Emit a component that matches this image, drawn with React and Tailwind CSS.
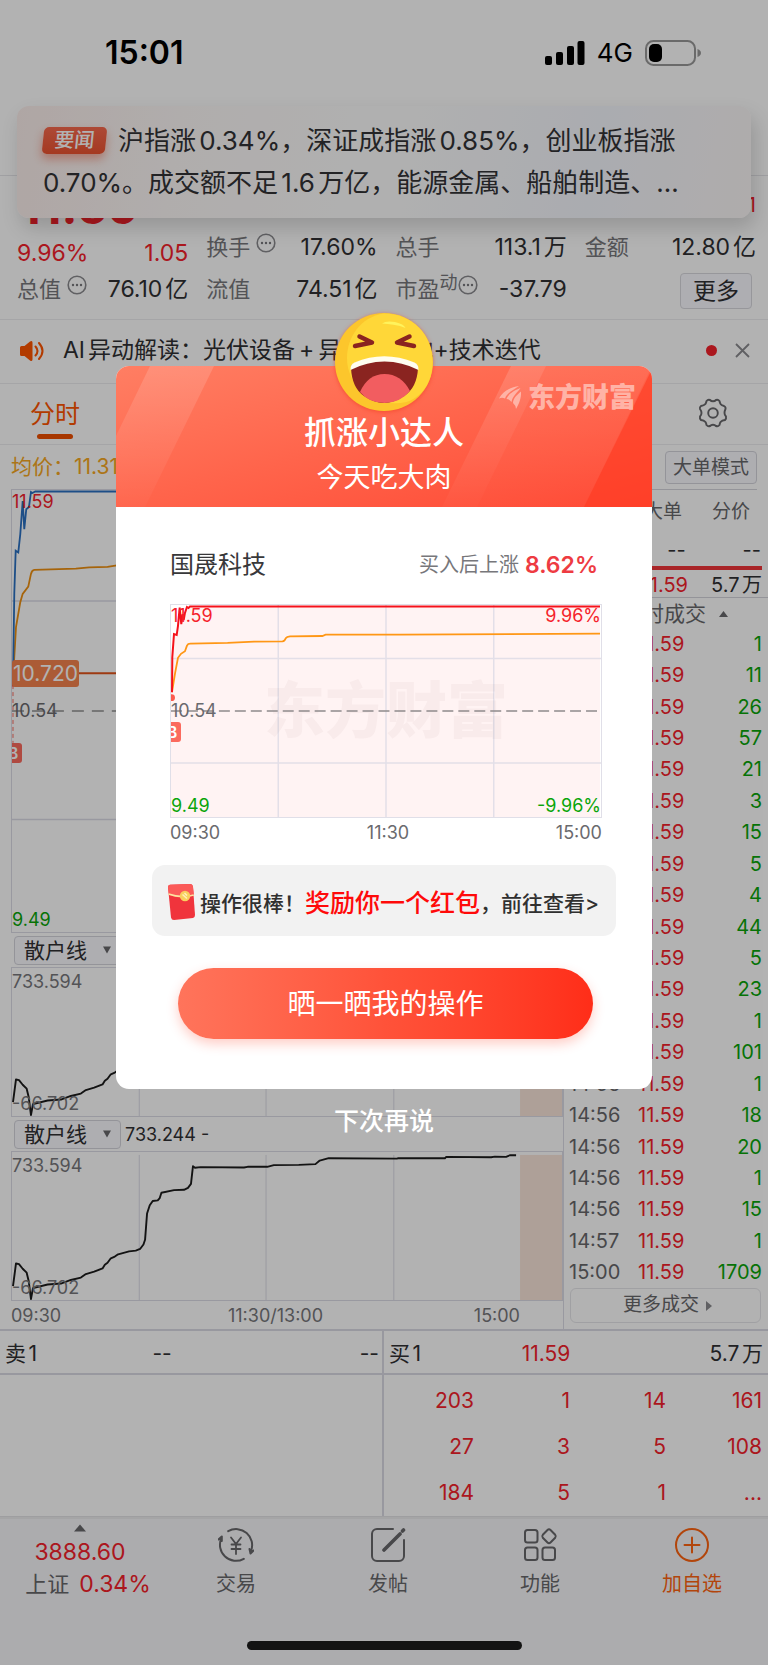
import React from "react";

const FLOW_LINE =
  "M1 136L4 113L7 113.7L10.7 118.3L14.7 122.3L16.7 130.7L19 149L21 138L35.7 134.3L49 133.3L59 129.7L69 127.3L74 123.7L82.3 121.3L90.7 118L93 114.3L95.7 112.3L99 107.7L103 106L106.3 103.7L117.3 100.7L124 100L128.3 98.3L131.7 93.7L133.3 89L135.3 62.3L138 54L141 49.7L146 49L148 46.7L149.7 41.3L162.3 38.7L172.3 38.3L176.3 36.3L179.3 32.3L181.3 14.3L183.3 16L189 15.3L232.3 15.7L236 15L255.7 15L262.3 13.3L287.3 13L304 12.3L308.3 8.7L317.3 6.3L385.7 6.7L387 6.3L433.7 6.3L435 5L480 5.3L483.7 4.7L495 5L498.7 3.3L505 3.3";

const MODAL_PRICE =
  "M1 88L1.3 52.7L3 29.3L5.7 30.3L7 21L8.7 2.7L10.3 19.3L11.7 9.3L12.7 15.3L14 8L16 2L17.5 3L19 1.5L430 1.5";

const MODAL_AVG =
  "M1 88L4 69.3L7 53.3L10 49.3L14 46.7L16 41Q17 39 19.3 39L56.7 38.3L83.3 37L111.7 36.7Q114 36.500 115 33.500Q116 32 119.3 31.7L151.7 31.3L155 30L230 30L430 29";

const TICKS = [
  ["14:54", "1"],
  ["14:54", "11"],
  ["14:54", "26"],
  ["14:55", "57"],
  ["14:55", "21"],
  ["14:55", "3"],
  ["14:55", "15"],
  ["14:55", "5"],
  ["14:55", "4"],
  ["14:55", "44"],
  ["14:55", "5"],
  ["14:56", "23"],
  ["14:56", "1"],
  ["14:56", "101"],
  ["14:56", "1"],
  ["14:56", "18"],
  ["14:56", "20"],
  ["14:56", "1"],
  ["14:56", "15"],
  ["14:57", "1"],
  ["15:00", "1709"],
];

const QUEUE = [
  ["203", "1", "14", "161"],
  ["27", "3", "5", "108"],
  ["184", "5", "1", "..."],
];

function InfoDots() {
  return (
    <svg className="size-5 shrink-0" viewBox="0 0 20 20" fill="none" stroke="#8a8a8e" strokeWidth="1.6">
      <circle cx="10" cy="10" r="8.800" />
      <g fill="#77777b" stroke="none">
        <circle cx="6" cy="10" r="1.200" />
        <circle cx="10" cy="10" r="1.200" />
        <circle cx="14" cy="10" r="1.200" />
      </g>
    </svg>
  );
}

function Stat({ label, value, info, sup }) {
  return (
    <div className="flex items-center justify-between self-start leading-8">
      <span className="flex items-center text-[22px] text-[#77777b]">
        {label}
        {sup && <sup className="top-0 mb-3 text-lg leading-5">{sup}</sup>}
        {info && (
          <span className={sup ? "mb-2" : "mb-2 ml-1.5"}>
            <InfoDots />
          </span>
        )}
      </span>
      <span className="text-[#303033]">{value}</span>
    </div>
  );
}

function StatusBar() {
  return (
    <div className="flex h-[105px] items-center justify-between pl-[105px] pr-[67px] text-black">
      <span className="text-[32px] font-semibold">15:01</span>
      <div className="flex items-center">
        <svg className="h-6 w-10" viewBox="0 0 40 24">
          <rect x="0" y="15" width="7" height="9" rx="2" />
          <rect x="11" y="11" width="7" height="13" rx="2" />
          <rect x="22" y="5" width="7" height="19" rx="2" />
          <rect x="32.500" y="0" width="7" height="24" rx="2" />
        </svg>
        <span className="ml-3 text-[26px]">4G</span>
        <svg className="ml-3 h-[26px] w-14" viewBox="0 0 56 26">
          <rect x="1" y="1" width="49" height="24" rx="7.500" fill="none" stroke="#999" strokeWidth="2" />
          <rect x="4" y="4" width="13" height="18" rx="5" />
          <path d="M52.500 9q3.500 1.500 3.500 4t-3.500 4z" fill="#999" />
        </svg>
      </div>
    </div>
  );
}

function NewsToast() {
  return (
    <div className="absolute inset-x-[17px] top-[106px] rounded-xl bg-[linear-gradient(100deg,#fbeeeb_0%,#fcf8f7_22%,#fdfdfd_50%,#f4f6fd_78%,#fbf6f6_100%)] pb-[14px] pl-[26px] pr-4 pt-[14px] text-[26px] leading-[42px] text-[#333336] shadow-[4px_10px_20px_rgba(0,0,0,0.16)]">
      <p className="[text-autospace:normal]">
        <span className="relative -top-0.5 mr-3 inline-block w-[63px] -skew-x-6 rounded-[5px] bg-gradient-to-b from-[#f8694d] to-[#ec5330] text-center align-middle text-[20px] font-medium leading-[27px] text-white shadow-[0_5px_10px_rgba(236,83,48,0.45)]">
          要闻
        </span>
        沪指涨0.34%，深证成指涨0.85%，创业板指涨
        <br />
        0.70%。成交额不足1.6万亿，能源金属、船舶制造、…
      </p>
    </div>
  );
}

function Quote() {
  return (
    <section className="border-b border-[#ececef] pb-[10px] pl-[17px] pr-3 text-[23px] [text-autospace:normal]">
      <div className="flex h-[55px] items-start justify-between text-[#f5222b]">
        <strong className="pl-[3px] text-[48px] font-bold leading-[62px]">11.59</strong>
        <span className="text-xl leading-[58px]">11</span>
      </div>
      <div className="grid h-[38px] grid-cols-4 gap-x-[18px]">
        <div className="flex justify-between self-end leading-8 text-[#f5222b]">
          <span>9.96%</span>
          <span>1.05</span>
        </div>
        <Stat label="换手" value="17.60%" info />
        <Stat label="总手" value="113.1万" />
        <Stat label="金额" value="12.80亿" />
      </div>
      <div className="grid h-10 grid-cols-4 items-center gap-x-[18px] pt-1">
        <Stat label="总值" value="76.10亿" info />
        <Stat label="流值" value="74.51亿" />
        <Stat label="市盈" value="-37.79" sup="动" info />
        <button className="mr-1 justify-self-end rounded border border-[#d8d8de] bg-[#fafaff] px-3 leading-[34px] text-[#303033]">
          更多
        </button>
      </div>
    </section>
  );
}

function AlertRow() {
  return (
    <section className="flex h-16 items-center border-b border-[#ececef] pb-0.5 pl-5 pr-[18px]">
      <svg className="h-6 w-6 shrink-0" viewBox="0 0 24 24" fill="#ff5500">
        <path d="M0 8.500q0-1.500 1.500-1.500H4.500L10 2.600Q12.500 1 12.500 3.800v16.400Q12.500 23 10 21.400L4.500 17H1.500Q0 17 0 15.500z" />
        <path d="M15.500 7.500q4 4.500 0 9M19 4q7 8 0 16" fill="none" stroke="#ff5500" strokeWidth="2" strokeLinecap="round" />
      </svg>
      <p className="ml-[19px] flex-1 whitespace-nowrap text-[23px] text-[#303033] [text-autospace:normal]">
        AI异动解读：光伏设备&thinsp;+&thinsp;异质结电池+技术迭代
      </p>
      <span className="size-[11px] rounded-full bg-[#f5222b]" />
      <button aria-label="关闭" className="ml-[18px]">
        <svg className="size-[15px]" viewBox="0 0 15 15" stroke="#8a8a8e" strokeWidth="1.800">
          <path d="M1 1l13 13M14 1L1 14" />
        </svg>
      </button>
    </section>
  );
}

function TabRow() {
  return (
    <nav className="flex items-start justify-between border-b border-[#ececef] pb-[5px] pl-[30px] pr-10 pt-3">
      <button className="flex flex-col items-center text-[25px] leading-9 text-[#ff5500]">
        分时
        <span className="mt-0.5 h-[5px] w-9 rounded-full bg-[#f05000]" />
      </button>
      <button aria-label="设置" className="mt-0.5">
        <svg className="size-[30px]" viewBox="0 0 30 30" fill="none" stroke="#67676b" strokeWidth="1.900" strokeLinejoin="round">
          <path d="M8.500 3Q10 1.200 12 2Q13.200 3.300 15 3.300Q16.800 3.300 18 2Q20 1.200 21.500 3Q21.800 5 22.700 6.200Q23.700 7.500 26 8Q28 9 27.500 11Q26.500 13 26.500 15Q26.500 17 28 18.500Q28.500 20.500 27 22Q24 22.500 22.700 23.800Q21.800 25 21.500 27Q20 28.800 18 28Q16.800 26.700 15 26.700Q13.200 26.700 12 28Q10 28.800 8.500 27Q8.200 25 7.300 23.800Q6 22.500 3 22Q1.500 20.500 2 18.500Q3.500 17 3.500 15Q3.500 13 2 11Q1.500 9 3 8Q6 7.500 7.300 6.200Q8.200 5 8.500 3Z" />
          <circle cx="15" cy="15" r="4.800" />
        </svg>
      </button>
    </nav>
  );
}

function BuyTag({ place }) {
  return (
    <span className={`absolute -left-2 w-[18px] rounded-[3px] bg-[#fb6a5e] text-center text-base font-semibold leading-5 text-white ${place}`}>
      B
    </span>
  );
}

function MainChart() {
  return (
    <div className="relative ml-[11px] flex h-[444px] flex-col justify-between overflow-hidden border border-[#dcdce6] text-lg leading-6">
      <svg className="absolute inset-0 size-full" viewBox="0 0 551 444" preserveAspectRatio="none" fill="none">
        <path d="M127.500 0V444M254.500 0V444M382 0V444M0 111.500H551M0 331H551" stroke="#dcdce6" strokeWidth="1.500" />
        <path d="M0 222H551" stroke="#909090" strokeWidth="1.500" strokeDasharray="12 8" />
        <rect x="509" width="42" height="444" fill="#fde5d8" />
        <path d="M0 184H551" stroke="#e2541a" strokeWidth="2" />
        <path d="M1 196V254" stroke="#fb6a5e" strokeWidth="1" strokeDasharray="4 3" />
        <path d="M1.700 178L4 137.700L8.300 112.700L10.700 104.300L16.300 97L19 84.300Q20 80.500 22.300 80.300L64 79L77.300 77.700L95.700 77.300L105 75.700L510 60" stroke="#ee9010" strokeWidth="1.800" />
        <path d="M1 191L2.300 104L3.700 61L6.300 62.700L8.300 44.300L10.700 11L12.300 39.300L14.300 19.300L17 17L19 2L20.500 3L23.300 1.500H510" stroke="#2a70c2" strokeWidth="1.800" />
        <circle cx="1" cy="194" r="3.500" fill="#fb4a3e" />
      </svg>
      <span className="relative text-[#f5222b]">11.59</span>
      <span className="relative text-[#6a6a6e]">10.54</span>
      <span className="relative text-[#0aa50a]">9.49</span>
      <span className="absolute left-0 top-[170px] rounded-[3px] bg-[#f5834e] px-px text-[21px] leading-[27px] text-white">10.720</span>
      <BuyTag place="top-[253px]" />
    </div>
  );
}

function IndicatorBar({ value }) {
  return (
    <div className="flex h-[34px] items-center pl-[14px] text-lg text-[#303033]">
      <div className="relative flex items-center">
        <select aria-label="指标" className="h-[29px] w-[107px] appearance-none rounded border border-[#d4d4dc] bg-[#fafafe] pl-[9px] text-[21px] leading-7">
          <option>散户线</option>
        </select>
        <svg className="pointer-events-none absolute right-2.5 size-2" viewBox="0 0 8 8" fill="#67676b">
          <path d="M0 0.500h8L4 7.500z" />
        </svg>
      </div>
      <span className="ml-1 pt-0.5">{value}</span>
    </div>
  );
}

function FlowChart() {
  return (
    <div className="relative ml-[11px] flex h-[150px] flex-col justify-between border border-[#dcdce6] pt-0.5 text-lg leading-6 text-[#77777b]">
      <svg className="absolute inset-0 size-full" viewBox="0 0 551 150" preserveAspectRatio="none" fill="none">
        <path d="M127.500 3V150M254.500 3V150M382.500 3V150" stroke="#dcdce6" strokeWidth="1" />
        <rect x="509" y="3" width="42" height="147" fill="#fae6da" />
        <path d={FLOW_LINE} stroke="#1c1c1c" strokeWidth="1.900" strokeLinejoin="round" />
      </svg>
      <span className="relative">733.594</span>
      <span className="relative">-66.702</span>
    </div>
  );
}

function TradePanel() {
  return (
    <aside className="flex w-[205px] shrink-0 flex-col border-l border-[#dcdce6] text-xl text-[#303033] [text-autospace:normal]">
      <div className="mr-[11px] flex h-[45px] items-center justify-end border-b border-[#d4d4dc]">
        <button className="rounded border border-[#d4d4dc] bg-[#fafafe] px-[7px] text-[19px] leading-[31px] text-[#67676b]">
          大单模式
        </button>
      </div>
      <div className="flex h-[44px] items-center justify-end gap-[30px] pr-[18px] text-[19px] text-[#67676b]">
        <button>大单</button>
        <button>分价</button>
      </div>
      <div className="flex h-8 items-center justify-between pl-[6px] pr-[7px]">
        <span>卖1</span>
        <span className="flex-1 pr-[57px] text-right">--</span>
        <span>--</span>
      </div>
      <div className="mr-1.5 h-1 bg-[#f2353a]" />
      <div className="flex h-7 items-center border-b border-[#d4d4dc] pl-[6px] pr-[6px] pt-0.5">
        <span>买1</span>
        <span className="ml-auto text-[#f5222b]">11.59</span>
        <span className="w-[74px] text-right">5.7万</span>
      </div>
      <button className="flex h-[30px] items-center justify-end gap-[13px] pr-10 pt-0.5 text-[21px] text-[#67676b]">
        实时成交
        <svg className="h-1.5 w-[9px]" viewBox="0 0 9 6" fill="#67676b">
          <path d="M0 6L4.500 0L9 6z" />
        </svg>
      </button>
      <table className="flex flex-1 flex-col">
        <tbody className="grid flex-1 auto-rows-fr">
          {TICKS.map(([time, volume], i) => (
            <tr key={i} className="flex items-center pl-[5px] pr-1.5">
              <td className="w-[69px] text-[#67676b]">{time}</td>
              <td className="text-[#f5222b]">11.59</td>
              <td className="flex-1 text-right text-[#0aa50a]">{volume}</td>
            </tr>
          ))}
        </tbody>
      </table>
      <button className="mb-1.5 ml-1.5 mr-[7px] flex h-[35px] items-center justify-center gap-[7px] rounded-md border border-[#e6e6ea] pl-1 text-[19px] text-[#67676b]">
        更多成交
        <svg className="h-2.5 w-1.5" viewBox="0 0 6 10" fill="#8a8a8e">
          <path d="M0 0l6 5l-6 5z" />
        </svg>
      </button>
    </aside>
  );
}

function OrderBook() {
  return (
    <section className="border-b border-[#e2e2e6] text-[21px] text-[#303033] [text-autospace:normal]">
      <div className="grid grid-cols-2 border-y-2 border-[#dadae4] leading-[38px]">
        <div className="grid grid-cols-[34%_16%_1fr] border-r-2 border-[#dadae4] pl-[5px] pr-[3px] pt-1">
          <span>卖1</span>
          <span className="text-center">--</span>
          <span className="text-right">--</span>
        </div>
        <div className="grid grid-cols-[34%_16%_1fr] pl-[5px] pr-[5px] pt-1">
          <span>买1</span>
          <span className="text-center text-[#f5222b]">11.59</span>
          <span className="text-right">5.7万</span>
        </div>
      </div>
      <div className="grid grid-cols-2">
        <div className="border-r-2 border-[#dadae4]" />
        <div className="pt-[3px]">
          <table className="w-full table-fixed text-right text-[#f5222b]">
            <tbody>
              {QUEUE.map((row, i) => (
                <tr key={i} className="h-[46px]">
                  {row.map((cell, j) => (
                    <td key={j} className="pr-1.5">
                      {cell}
                    </td>
                  ))}
                </tr>
              ))}
            </tbody>
          </table>
        </div>
      </div>
    </section>
  );
}

function NavItem({ label, accent, children }) {
  return (
    <button className={`flex w-[152px] flex-col items-center pt-2 text-xl leading-8 ${accent ? "text-[#ff6410]" : "text-[#67676b]"}`}>
      <svg className="mb-[5px] size-9" viewBox="0 0 36 36" fill="none" stroke="currentColor" strokeWidth="2" strokeLinecap="round" strokeLinejoin="round">
        {children}
      </svg>
      {label}
    </button>
  );
}

function BottomNav() {
  return (
    <footer className="border-t-2 border-[#ececee] bg-[#f7f7fa]">
      <nav className="flex justify-between">
        <button className="flex flex-1 flex-col items-center pt-[5px] text-[23px] leading-8 text-[#f5222b]">
          <svg className="mb-1 h-2 w-3" viewBox="0 0 12 8" fill="#67676b">
            <path d="M0 7.500L6 0.500L12 7.500z" />
          </svg>
          3888.60
          <span className="pl-4">
            <span className="mr-2.5 text-[22px] text-[#67676b]">上证</span>
            0.34%
          </span>
        </button>
        <NavItem label="交易">
          <path d="M10.200 4.200A16 16 0 0 1 33 24M25.800 31.800A16 16 0 0 1 3.500 11M0.500 12.500L3.800 9.500V14M35.500 23.500L32.500 26.500L31.500 22" />
          <path d="M13 10.500l5 6.500l5-6.500M18 17v10M13.500 17.500h9M13.500 22h9" strokeWidth="1.800" />
        </NavItem>
        <NavItem label="发帖">
          <path d="M23 2H7a5 5 0 0 0-5 5v22a5 5 0 0 0 5 5h22a5 5 0 0 0 5-5V13" />
          <path d="M14 23L30 7M32.500 4L33.500 3" strokeWidth="3.600" />
        </NavItem>
        <NavItem label="功能">
          <rect x="3" y="3" width="12.500" height="12.500" rx="2.500" />
          <rect x="3" y="20.500" width="12.500" height="12.500" rx="2.500" />
          <rect x="20.500" y="20.500" width="12.500" height="12.500" rx="2.500" />
          <path d="M25.500 3Q27 1.500 28.500 3L33.200 7.800Q34.500 9.300 33.200 10.800L28.500 15.500Q27 17 25.500 15.500L20.800 10.800Q19.500 9.300 20.800 7.800Z" />
        </NavItem>
        <NavItem label="加自选" accent>
          <circle cx="18" cy="18" r="16" />
          <path d="M18 10.500v15M10.500 18h15" />
        </NavItem>
      </nav>
      <div className="mx-auto mt-[41px] h-[9px] w-[275px] rounded-full bg-[#1c1c1c]" />
      <div className="h-[15px]" />
    </footer>
  );
}

function LaughFace() {
  return (
    <svg className="absolute -top-[54px] left-1/2 size-[100px] -translate-x-1/2 drop-shadow-[0_1px_2px_rgba(240,60,30,0.6)]" viewBox="0 0 100 100">
      <circle cx="50" cy="50" r="49" fill="#fcc62c" />
      <path d="M50 1.500c28 0 48.500 21 48.500 48.500c0 21-11 35-26 40C40 97 13 75 13 46C13 26 26 5 50 1.500z" fill="#ffd738" />
      <path d="M48 11.500q4-3 13-1.500q9 2 10.500 6q-5-2.500-12-3.200q-6-.7-11.500-1.300z" fill="#fff35c" />
      <path d="M25.500 24.500L38 30.500L21 34M75.500 24.500L63 30.500L80 34" fill="none" stroke="#8a2420" strokeWidth="4.500" strokeLinecap="round" strokeLinejoin="round" />
      <path d="M17 56q0-4 5-5.500Q50 41 79 50.500q5 1.500 5 5.500Q83 76 70 84Q60 91 50 91T30 84Q18 76 17 56z" fill="#8a2420" />
      <path d="M26 80Q34 62 50.500 62T76 79Q66 91 50.500 91T26 80z" fill="#f25d60" />
      <path d="M16.500 58q-.5-5.500 4-7.500Q50 38 80.500 50.500q4.500 2 4 7.500Q68 49.500 50.500 49.500T16.500 58z" fill="#fffdf0" />
    </svg>
  );
}

function ModalHeader() {
  return (
    <header className="relative rounded-t-[13px] bg-gradient-to-br from-[#ff7e63] via-[#ff644b] to-[#ff4733] pb-[9px] pt-[47px] text-center text-white">
      <svg className="absolute inset-0 size-full rounded-t-[13px]" viewBox="0 0 536 141" preserveAspectRatio="none">
        <defs>
          <linearGradient id="beam" x1="0" y1="0" x2="0" y2="1">
            <stop offset="0" stopColor="#fff" stopOpacity="0.150" />
            <stop offset="1" stopColor="#fff" stopOpacity="0.020" />
          </linearGradient>
        </defs>
        <path d="M34 0H98L29 141H0V70z" fill="url(#beam)" />
        <path d="M395 0H430L361 141H326z" fill="url(#beam)" />
        <path d="M430 0H536V0L468 141H361z" fill="url(#beam)" opacity="0.400" />
        <path d="M536 3V141H468z" fill="#ff3a22" opacity="0.600" />
      </svg>
      <div className="absolute right-4 top-4 flex items-center gap-1.5 text-[27px] font-black leading-8 text-[#ffb3a6]">
        <svg className="h-6 w-[23px]" viewBox="0 0 23 24" fill="currentColor">
          <path d="M0 12.500C4 5 12 1 20 0C14 4 8 7 6 12.500Q3 11 0 12.500z" />
          <path d="M7.500 13C9 8 16 4 21.500 2C19 6 13.500 10 12.500 16Q10 13 7.500 13z" />
          <path d="M14 17C14 12 19 8 22 5.500C22.500 12 20 18 17 23Q16.500 19 14 17z" />
        </svg>
        东方财富
      </div>
      <LaughFace />
      <h2 className="relative text-[32px] font-medium leading-10">抓涨小达人</h2>
      <p className="relative mt-[5px] text-[27px] leading-10">今天吃大肉</p>
    </header>
  );
}

function ModalChart() {
  return (
    <div className="relative mt-[23px] flex h-[214px] flex-col justify-between overflow-hidden border border-[#e0dfe8] text-lg leading-[22px]">
      <svg className="absolute inset-0 size-full" viewBox="0 0 431 214" preserveAspectRatio="none" fill="none">
        <path d={`${MODAL_PRICE}V214H0V88z`} fill="#fff3f3" />
        <path d="M107.500 0V214M215.500 0V214M323.500 0V214M0 54H431M0 159.500H431" stroke="#e3dfe8" strokeWidth="1.500" />
      </svg>
      <span className="absolute inset-0 flex items-center justify-center text-[61px] font-black text-[#5a3030]/[0.04]">东方财富</span>
      <svg className="absolute inset-0 size-full" viewBox="0 0 431 214" preserveAspectRatio="none" fill="none">
        <path d="M0 107H431" stroke="#8f8a8c" strokeWidth="1.700" strokeDasharray="11 5" />
        <path d={MODAL_AVG} stroke="#ff9715" strokeWidth="1.800" />
        <path d={MODAL_PRICE} stroke="#f5121b" strokeWidth="2" />
        <circle cx="0.500" cy="93.500" r="3.500" fill="#fb5a4e" />
      </svg>
      <div className="relative flex justify-between text-[#f5222b]">
        <span>11.59</span>
        <span>9.96%</span>
      </div>
      <span className="relative text-[#6a6a6e]">10.54</span>
      <div className="relative flex justify-between text-[#0aa50a]">
        <span>9.49</span>
        <span>-9.96%</span>
      </div>
      <BuyTag place="top-[117px]" />
    </div>
  );
}

function RedPacket() {
  return (
    <svg className="-mt-1 mr-[5px] h-9 w-7 shrink-0" viewBox="0 0 28 36">
      <path d="M1 3Q1 1 3 .8L23 0Q25.500 0 26 3L28 31Q28 33.500 26 34L7 36Q4.500 36 4 33.500z" fill="#f0343c" />
      <path d="M1 3Q1 1 3 .8L23 0Q25.500 0 26 3L27 11Q14 16 2 11z" fill="#fb5a58" />
      <path d="M1.500 10Q14 14.500 26.800 11" fill="none" stroke="#fde3a0" strokeWidth="1.800" />
      <circle cx="18" cy="12" r="5.200" fill="#f9cf5e" />
      <path d="M15.500 10.500l4.500 4M17.500 9l2.500 2.500" stroke="#fff1b8" strokeWidth="1.500" />
    </svg>
  );
}

function ShareDialog() {
  return (
    <div className="absolute inset-0 bg-black/30 px-[116px] pt-[366px]">
      <div role="dialog" aria-label="抓涨小达人" className="rounded-[13px] bg-white pb-[50px]">
        <ModalHeader />
        <div className="pl-[54px] pr-[50px] pt-[42px]">
          <div className="flex items-center justify-between pr-1 leading-8">
            <h3 className="text-2xl leading-8 text-[#38383a]">国晟科技</h3>
            <p className="flex items-center gap-1.5 text-[20px] text-[#77777b]">
              买入后上涨
              <strong className="text-[23px] font-semibold leading-8 text-[#ee3b42]">8.62%</strong>
            </p>
          </div>
          <ModalChart />
          <div className="flex justify-between text-lg leading-[30px] text-[#6a6a6e]">
            <span>09:30</span>
            <span>11:30</span>
            <span>15:00</span>
          </div>
        </div>
        <a href="#reward" className="mx-9 mt-[17px] flex h-[71px] items-center whitespace-nowrap rounded-[13px] bg-[#f2f2f2] pl-[15px] pt-1.5 text-[21px] font-medium text-[#303030]">
          <RedPacket />
          操作很棒！
          <span className="text-[25px] text-[#ff0a0a]">奖励你一个红包</span>
          ，前往查看&gt;
        </a>
        <div className="mt-8 pl-[62px] pr-[59px]">
          <button className="h-[71px] w-full rounded-full bg-gradient-to-r from-[#ff745b] via-[#ff5239] to-[#ff2d18] text-[28px] text-white shadow-[0_5px_12px_rgba(255,60,30,0.25)]">
            晒一晒我的操作
          </button>
        </div>
      </div>
      <button className="mx-auto mt-[14px] block text-[25px] font-medium leading-9 text-white">下次再说</button>
    </div>
  );
}

export default function App() {
  return (
    <div className="relative min-h-screen overflow-hidden bg-[#f7f7fa] font-['Inter','Noto_Sans_CJK_SC',sans-serif]">
      <main className="bg-white">
        <header className="border-b border-[#e6e6ea] pb-[70px]">
          <StatusBar />
        </header>
        <Quote />
        <AlertRow />
        <TabRow />
        <div className="flex">
          <div className="min-w-0 flex-1">
            <p className="h-[44px] whitespace-nowrap pl-[11px] text-[21px] leading-[44px] text-[#f7a823]">均价：11.31</p>
            <MainChart />
            <IndicatorBar value="733.244 -" />
            <FlowChart />
            <IndicatorBar value="733.244 -" />
            <FlowChart />
            <div className="ml-[11px] flex justify-between pr-[43px] pt-0.5 text-lg leading-[26px] text-[#77777b]">
              <span>09:30</span>
              <span className="pl-4">11:30/13:00</span>
              <span>15:00</span>
            </div>
          </div>
          <TradePanel />
        </div>
        <OrderBook />
      </main>
      <BottomNav />
      <NewsToast />
      <ShareDialog />
    </div>
  );
}
